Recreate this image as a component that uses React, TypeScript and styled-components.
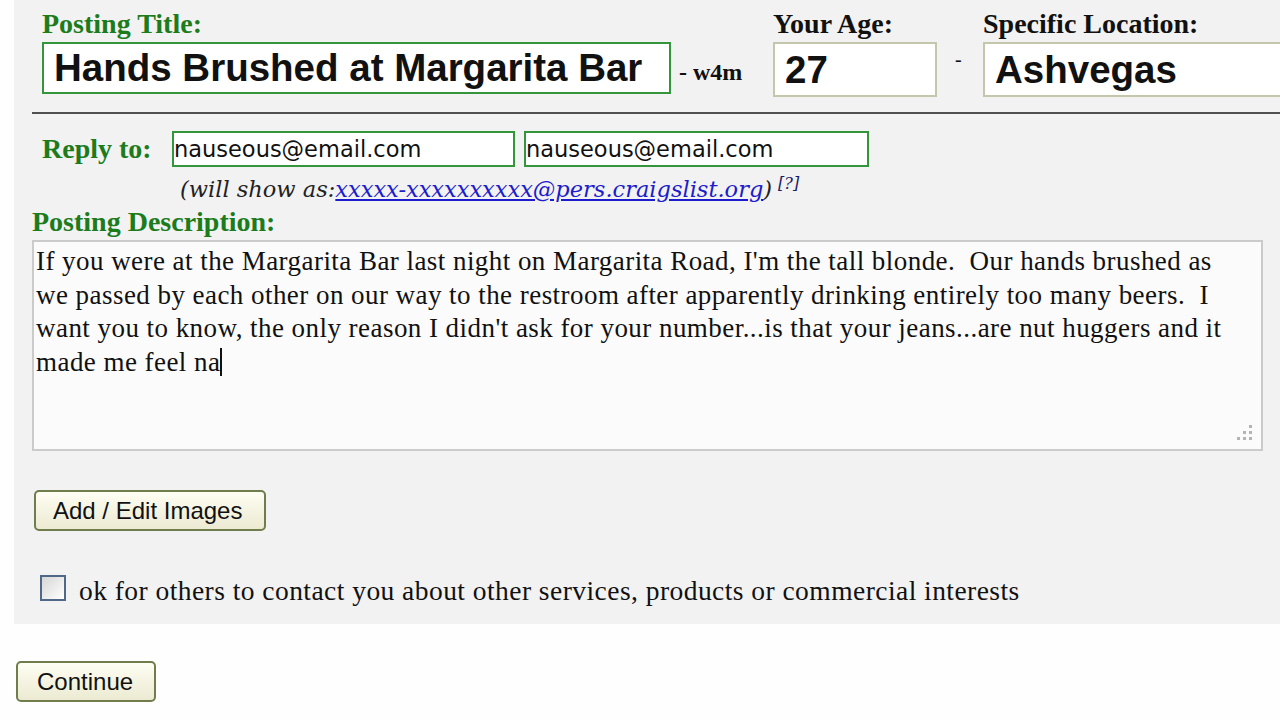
import React from "react";
import styled, { createGlobalStyle } from "styled-components";

const Global = createGlobalStyle`
  html, body { margin: 0; padding: 0; background: #fefefe; }
  body { font-family: "Liberation Serif", "Times New Roman", serif; color: #111; overflow: hidden; }
`;

const Page = styled.div`
  width: 1280px;
  height: 720px;
  overflow: hidden;
`;

const Panel = styled.div`
  margin-left: 14px;
  background: #f2f2f2;
  padding: 9px 0 23px 0;
`;

const TopRow = styled.div`
  display: grid;
  grid-template-columns: 629px 102px 164px 46px 320px;
  padding-left: 28px;
  overflow: hidden;
`;

const Field = styled.div`
  display: flex;
  flex-direction: column;
  gap: 3px;
`;

const Label = styled.label<{ $green?: boolean }>`
  font-family: "Liberation Serif", "Times New Roman", serif;
  font-weight: bold;
  font-size: 28px;
  line-height: 30px;
  color: ${(p) => (p.$green ? "#1c7c1c" : "#111")};
  white-space: nowrap;
`;

const BigInput = styled.input<{ $green?: boolean; $h: number }>`
  box-sizing: border-box;
  width: 100%;
  height: ${(p) => p.$h}px;
  border: 2px solid ${(p) => (p.$green ? "#34963a" : "#c4c7ab")};
  background: #fff;
  font-family: "Liberation Sans", Arial, sans-serif;
  font-weight: bold;
  font-size: 38.5px;
  color: #111;
  padding: 0 0 0 10px;
  outline: none;
  margin: 0;
`;

const Suffix = styled.span`
  font-family: "Liberation Serif", serif;
  font-weight: bold;
  font-size: 24px;
  line-height: 24px;
  margin-top: 51px;
  padding-left: 8px;
  white-space: nowrap;
`;

const Dash = styled.span`
  font-family: "Liberation Serif", serif;
  font-size: 20px;
  line-height: 20px;
  margin-top: 40px;
  padding-left: 18px;
`;

const Rule = styled.hr`
  margin: 15px 0 0 18px;
  border: none;
  height: 2px;
  background: #505050;
`;

const ReplyRow = styled.div`
  display: grid;
  grid-template-columns: 121px 343px 345px;
  column-gap: 9px;
  align-items: center;
  margin-top: 17px;
  padding-left: 28px;
`;

const EmailInput = styled.input`
  box-sizing: border-box;
  width: 100%;
  height: 36px;
  border: 2px solid #34963a;
  background: #fff;
  font-family: "DejaVu Sans", Verdana, sans-serif;
  font-size: 22.5px;
  color: #111;
  padding: 0;
  outline: none;
  margin: 0;
`;

const ShowAs = styled.div`
  padding-left: 166px;
  margin-top: 3px;
  font-family: "DejaVu Serif", Georgia, serif;
  font-style: italic;
  font-size: 22.5px;
  line-height: 28px;
  color: #222;
  white-space: nowrap;
`;

const Link = styled.a`
  color: #1c1ccc;
  text-decoration: underline;
`;

const Help = styled.sup`
  font-size: 16px;
  margin-left: 6px;
  color: #1a1a6a;
  vertical-align: 8px;
`;

const DescLabel = styled(Label)`
  display: block;
  padding-left: 18px;
  margin-top: 4px;
`;

const TextBox = styled.div`
  position: relative;
  box-sizing: border-box;
  margin: 3px 0 0 18px;
  width: 1231px;
  height: 211px;
  border: 2px solid #cbcbcb;
  background: #fbfbfb;
  padding: 3px 0 0 2px;
  font-family: "Liberation Serif", "Times New Roman", serif;
  font-size: 27px;
  letter-spacing: 0.45px;
  line-height: 33.5px;
  color: #111;
  white-space: pre;
`;

const Caret = styled.span`
  display: inline-block;
  width: 2px;
  height: 28px;
  background: #111;
  vertical-align: -5px;
`;

const Grip = styled.svg`
  position: absolute;
  right: 8px;
  bottom: 8px;
`;

const Button = styled.button<{ $w: number }>`
  box-sizing: border-box;
  width: ${(p) => p.$w}px;
  height: 41px;
  border: 2px solid #6f7d4c;
  border-radius: 5px;
  background: linear-gradient(#fefef3, #ecead2);
  font-family: "Liberation Sans", Arial, sans-serif;
  font-size: 24px;
  color: #111;
  text-align: left;
  padding: 0 0 0 17px;
  cursor: pointer;
`;

const ImagesButton = styled(Button)`
  display: block;
  margin: 39px 0 0 20px;
`;

const CheckRow = styled.label`
  display: flex;
  align-items: flex-end;
  margin: 44px 0 0 26px;
  gap: 13px;
`;

const Box = styled.span`
  box-sizing: border-box;
  width: 26px;
  height: 26px;
  border: 2px solid #4f6888;
  background: linear-gradient(135deg, #d6d6d6, #ffffff);
  flex: none;
`;

const CheckText = styled.span`
  font-family: "Liberation Serif", "Times New Roman", serif;
  font-size: 27.5px;
  letter-spacing: 0.45px;
  line-height: 26px;
  margin-bottom: -3px;
`;

const ContinueButton = styled(Button)`
  display: block;
  margin: 37px 0 0 16px;
  padding-left: 19px;
`;

const lines = [
  "If you were at the Margarita Bar last night on Margarita Road, I'm the tall blonde.  Our hands brushed as",
  "we passed by each other on our way to the restroom after apparently drinking entirely too many beers.  I",
  "want you to know, the only reason I didn't ask for your number...is that your jeans...are nut huggers and it",
  "made me feel na",
];

export default function App() {
  return (
    <Page>
      <Global />
      <Panel>
        <TopRow>
          <Field>
            <Label $green>Posting Title:</Label>
            <BigInput $green $h={52} defaultValue="Hands Brushed at Margarita Bar" />
          </Field>
          <Suffix>- w4m</Suffix>
          <Field>
            <Label>Your Age:</Label>
            <BigInput $h={55} defaultValue="27" />
          </Field>
          <Dash>-</Dash>
          <Field>
            <Label>Specific Location:</Label>
            <BigInput $h={55} defaultValue="Ashvegas" />
          </Field>
        </TopRow>
        <Rule />
        <ReplyRow>
          <Label $green>Reply to:</Label>
          <EmailInput defaultValue="nauseous@email.com" />
          <EmailInput defaultValue="nauseous@email.com" />
        </ReplyRow>
        <ShowAs>
          (will show as:<Link href="#">xxxxx-xxxxxxxxxx@pers.craigslist.org</Link>)
          <Help>[?]</Help>
        </ShowAs>
        <DescLabel $green>Posting Description:</DescLabel>
        <TextBox role="textbox" aria-multiline="true">
          {lines.join("\n")}
          <Caret />
          <Grip width="18" height="18" viewBox="0 0 18 18">
            {[
              [14, 2],
              [8, 8],
              [14, 8],
              [2, 14],
              [8, 14],
              [14, 14],
            ].map(([x, y], i) => (
              <rect key={i} x={x} y={y} width="3" height="3" fill="#b4b4b4" />
            ))}
          </Grip>
        </TextBox>
        <ImagesButton $w={232}>Add / Edit Images</ImagesButton>
        <CheckRow>
          <Box />
          <CheckText>ok for others to contact you about other services, products or commercial interests</CheckText>
        </CheckRow>
      </Panel>
      <ContinueButton $w={140}>Continue</ContinueButton>
    </Page>
  );
}
